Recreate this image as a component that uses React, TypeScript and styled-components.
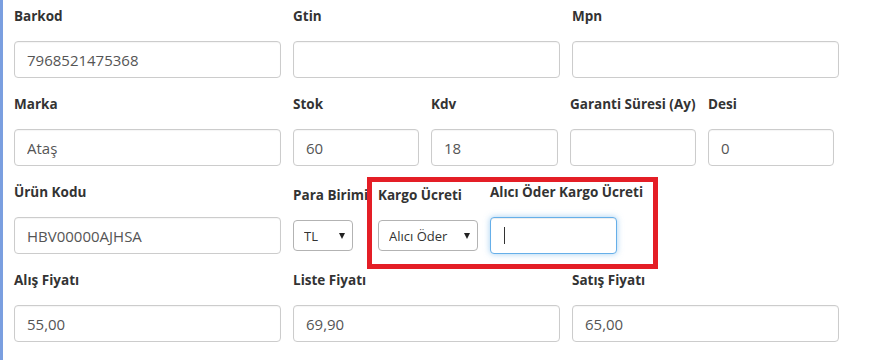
import React from "react";
import styled, { createGlobalStyle } from "styled-components";

const GlobalStyle = createGlobalStyle`
  html, body { margin: 0; padding: 0; background: #fff; }
  body { font-family: "Open Sans", "Noto Sans", sans-serif; }
  * { box-sizing: border-box; }
`;

const Page = styled.div`
  height: 360px;
  border-left: 3px solid #7a9fe0;
  padding: 6px 0 0 11px;
  overflow: hidden;
`;

const Row = styled.div<{ $cols: string }>`
  display: grid;
  grid-template-columns: ${(p) => p.$cols};
  column-gap: 12px;
  align-items: start;
  margin-bottom: 16px;
`;

const FlexRow = styled.div`
  display: flex;
  align-items: flex-start;
  gap: 12px;
  margin-bottom: 16px;
`;

const Cluster = styled.div`
  display: flex;
  align-items: flex-start;
`;

const Group = styled.div<{ $width?: number; $offset?: number }>`
  display: flex;
  flex-direction: column;
  flex: none;
  width: ${(p) => (p.$width ? `${p.$width}px` : "auto")};
  padding-top: ${(p) => p.$offset ?? 0}px;
`;

const Label = styled.label`
  display: block;
  font-size: 13.5px;
  font-weight: 700;
  line-height: 20px;
  color: #333;
  white-space: nowrap;
  margin-bottom: 15px;
`;

const TextInput = styled.input<{ $focused?: boolean }>`
  display: block;
  width: 100%;
  height: 37px;
  padding: 0 12px;
  font-family: inherit;
  font-size: 15px;
  color: #555;
  background: #fff;
  border: 1px solid ${(p) => (p.$focused ? "#66afe9" : "#ccc")};
  border-radius: 4px;
  outline: none;
  box-shadow: ${(p) =>
    p.$focused
      ? "inset 0 1px 1px rgba(0,0,0,.075), 0 0 6px rgba(102,175,233,.6)"
      : "inset 0 1px 1px rgba(0,0,0,.04)"};
`;

const SelectWrap = styled.div<{ $width: number }>`
  position: relative;
  width: ${(p) => p.$width}px;
  &::after {
    content: "";
    position: absolute;
    right: 8px;
    top: 13px;
    border-left: 3px solid transparent;
    border-right: 3px solid transparent;
    border-top: 6px solid #222;
    pointer-events: none;
  }
`;

const Select = styled.select`
  appearance: none;
  -webkit-appearance: none;
  display: block;
  width: 100%;
  height: 31px;
  padding: 0 20px 0 10px;
  font-family: inherit;
  font-size: 13px;
  color: #333;
  background: #fff;
  border: 1px solid #b3b3b3;
  border-radius: 4px;
  outline: none;
`;

const Highlight = styled.div`
  display: flex;
  align-items: flex-start;
  gap: 12px;
  margin: -5px 0 -15px 0;
  padding: 0 10px 10px 6px;
  border: 5px solid #e41e26;
  position: relative;
  z-index: 1;
`;

const FocusField = styled.div`
  position: relative;
  width: 127px;
`;

const Caret = styled.span`
  position: absolute;
  left: 14px;
  top: 10px;
  width: 1px;
  height: 17px;
  background: #333;
`;

type FieldProps = { label: string; value?: string };

const Field = ({ label, value = "" }: FieldProps) => (
  <Group>
    <Label>{label}</Label>
    <TextInput defaultValue={value} />
  </Group>
);

export default function App() {
  return (
    <>
      <GlobalStyle />
      <Page>
        <Row $cols="267px 267px 267px">
          <Field label="Barkod" value="7968521475368" />
          <Field label="Gtin" />
          <Field label="Mpn" />
        </Row>
        <Row $cols="267px 126px 127px 126px 126px">
          <Field label="Marka" value="Ataş" />
          <Field label="Stok" value="60" />
          <Field label="Kdv" value="18" />
          <Field label="Garanti Süresi (Ay)" />
          <Field label="Desi" value="0" />
        </Row>
        <FlexRow>
          <Group $width={267}>
            <Label>Ürün Kodu</Label>
            <TextInput defaultValue="HBV00000AJHSA" />
          </Group>
          <Cluster>
            <Group $width={74} $offset={3}>
              <Label>Para Birimi</Label>
              <SelectWrap $width={60}>
                <Select defaultValue="TL">
                  <option value="TL">TL</option>
                  <option value="USD">USD</option>
                  <option value="EUR">EUR</option>
                </Select>
              </SelectWrap>
            </Group>
            <Highlight>
              <Group $offset={3}>
                <Label>Kargo Ücreti</Label>
                <SelectWrap $width={100}>
                  <Select defaultValue="alici">
                    <option value="alici">Alıcı Öder</option>
                    <option value="satici">Satıcı Öder</option>
                  </Select>
                </SelectWrap>
              </Group>
              <Group>
                <Label>Alıcı Öder Kargo Ücreti</Label>
                <FocusField>
                  <TextInput $focused defaultValue="" />
                  <Caret />
                </FocusField>
              </Group>
            </Highlight>
          </Cluster>
        </FlexRow>
        <Row $cols="267px 267px 267px">
          <Field label="Alış Fiyatı" value="55,00" />
          <Field label="Liste Fiyatı" value="69,90" />
          <Field label="Satış Fiyatı" value="65,00" />
        </Row>
      </Page>
    </>
  );
}
